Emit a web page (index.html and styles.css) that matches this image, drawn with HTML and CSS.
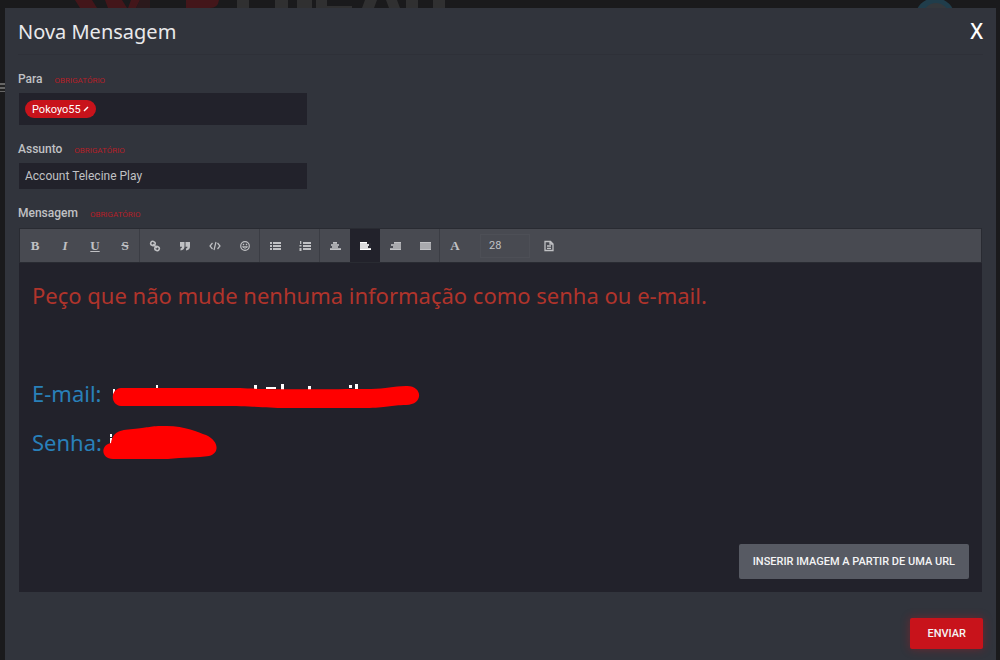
FILE: index.html
```
<!DOCTYPE html>
<html lang="pt-BR">
<head>
    <meta charset="UTF-8">
    <meta name="viewport" content="width=device-width, initial-scale=1.0">
    <title>Nova Mensagem</title>
    <link rel="stylesheet" href="styles.css">
</head>
<body>
    <svg class="topo" width="1000" height="8" viewBox="0 0 1000 8" aria-hidden="true">
        <path fill="#43161a" d="M75 0h17l5 8h-17zM105 0h17l5 8h-19zM131 0h9l-4 8h-8zM186 0h33q-1 8-9 8h-24z"/>
        <path fill="#2b191c" d="M140 0h10v8h-14z"/>
        <path fill="#303031" d="M237 0h12v8h-12zM275 0h13v8h-13zM297 0h15v8h-15zM316 0h11v8h-11zM327 6h25v2h-25zM365 0h12l-3 8h-12zM386 0h11l3 8h-11zM406 0h12v8h-12zM433 0h12v8h-12z"/>
        <circle cx="935" cy="18" r="20" fill="#203d4b"/>
        <circle cx="936" cy="16" r="13" fill="#34383c"/>
    </svg>
    <div class="menu-fundo"></div>

    <form class="modal">
        <header class="modal-topo">
            <h1>Nova Mensagem</h1>
            <button type="button" class="fechar" aria-label="Fechar">X</button>
        </header>

        <div class="campo">
            <div class="rotulo"><label for="para">Para</label><span class="obrigatorio">Obrigatório</span></div>
            <div class="caixa caixa-para">
                <button type="button" class="tag" id="para">Pokoyo55
                    <svg width="6" height="6" viewBox="0 0 6 6"><path d="M1 5L5 1" stroke="#fff" stroke-width="1.4"/></svg>
                </button>
            </div>
        </div>

        <div class="campo">
            <div class="rotulo"><label for="assunto">Assunto</label><span class="obrigatorio">Obrigatório</span></div>
            <input class="caixa assunto" id="assunto" type="text" value="Account Telecine Play">
        </div>

        <div class="rotulo"><span id="mensagem">Mensagem</span><span class="obrigatorio">Obrigatório</span></div>
        <div class="editor">
            <div class="barra">
                <div class="grupo">
                    <button type="button" class="letra" aria-label="Negrito">B</button>
                    <button type="button" class="letra italico" aria-label="Itálico">I</button>
                    <button type="button" class="letra sublinhado" aria-label="Sublinhado">U</button>
                    <button type="button" class="letra riscado" aria-label="Riscado">S</button>
                </div>
                <div class="grupo">
                    <button type="button" aria-label="Link">
                        <svg viewBox="0 0 12 12"><g fill="none" stroke="currentColor" stroke-width="1.6"><rect x="1.5" y="1.5" width="4.5" height="4" rx="2" transform="rotate(20 4 4)"/><rect x="6" y="6.5" width="4.500" height="4" rx="2" transform="rotate(20 8 8)"/><path d="M4 4l4 4"/></g></svg>
                    </button>
                    <button type="button" aria-label="Citação">
                        <svg viewBox="0 0 12 12"><path d="M1 2h4.500v4.500q0 3.500-4 4V8.500q1.500-.3 1.500-1.800H1zM6.500 2H11v4.500q0 3.500-4 4V8.500q1.500-.3 1.500-1.800h-2z"/></svg>
                    </button>
                    <button type="button" aria-label="Código">
                        <svg viewBox="0 0 12 12"><path fill="none" stroke="currentColor" stroke-width="1.200" d="M3.500 3L1 6l2.500 3M8.500 3L11 6 8.500 9M7 2L5 10"/></svg>
                    </button>
                    <button type="button" aria-label="Emoticons">
                        <svg viewBox="0 0 12 12"><circle cx="6" cy="6" r="4.300" fill="none" stroke="currentColor" stroke-width="1.200"/><path d="M3.800 3.700h1.400v1.600H3.800zM6.800 3.700h1.400v1.600H6.800z"/><path fill="none" stroke="currentColor" d="M3.500 6.800q2.500 3 5 0z"/></svg>
                    </button>
                </div>
                <div class="grupo">
                    <button type="button" aria-label="Lista">
                        <svg viewBox="0 0 12 12"><path d="M1 2h2v2H1zM4 2h8v2H4zM1 5h2v2H1zM4 5h8v2H4zM1 8h2v2H1zM4 8h8v2H4z"/></svg>
                    </button>
                    <button type="button" aria-label="Lista numerada">
                        <svg viewBox="0 0 12 12"><path d="M1 1h1.300v3H1zM4 2h8v2H4zM.5 5h2v1.500h-2zM4 5h8v2H4zM.5 8h2v3h-2zM4 8h8v2H4z"/></svg>
                    </button>
                </div>
                <div class="grupo">
                    <button type="button" aria-label="Centralizar">
                        <svg viewBox="0 0 12 12"><path d="M4 2h4v2H4zM2 4h8v2H2zM3 6h6v2H3zM1 8h11v2H1z"/><path class="vao" d="M1 4h11M1 6h11M1 8h11"/></svg>
                    </button>
                    <button type="button" class="ativo" aria-label="Alinhar à esquerda">
                        <svg viewBox="0 0 12 12"><path d="M1 2h7v2H1zM1 4h9v2H1zM1 6h8v2H1zM1 8h11v2H1z"/><path class="vao" d="M1 4h11M1 6h11M1 8h11"/></svg>
                    </button>
                    <button type="button" aria-label="Alinhar à direita">
                        <svg viewBox="0 0 12 12"><path d="M5 2h7v2H5zM2 4h10v2H2zM4 6h8v2H4zM1 8h11v2H1z"/><path class="vao" d="M1 4h11M1 6h11M1 8h11"/></svg>
                    </button>
                    <button type="button" aria-label="Justificar">
                        <svg viewBox="0 0 12 12"><path d="M1 2h11v8H1z"/><path class="vao" d="M1 4h11M1 6h11M1 8h11"/></svg>
                    </button>
                </div>
                <div class="grupo grupo-fonte">
                    <button type="button" class="letra" aria-label="Cor do texto">A</button>
                    <input class="tamanho" type="text" value="28" aria-label="Tamanho da fonte">
                    <button type="button" aria-label="Visualizar">
                        <svg viewBox="0 0 12 12"><path fill="none" stroke="currentColor" stroke-width="1.300" d="M2 1.500h5.500L10 4v6.500H2zM7 1.500V4h3M4 6h4M4 8.300h4"/></svg>
                    </button>
                </div>
            </div>

            <div class="texto" role="textbox" aria-labelledby="mensagem">
                <p class="aviso">Peço que não mude nenhuma informação como senha ou e-mail.</p>
                <p>&nbsp;</p>
                <p>E-mail:
                    <svg class="risco risco-email" width="310" height="36" viewBox="0 -6 310 36">
                        <path fill="#fff" d="M2 8h2v8H2zM45 4h2v4h-2zM143 4h3v6h-3zM155 6h10v2h-10zM170 3h3v8h-3zM197 5h3v6h-3zM238 4h3v3h-3zM244 3h3v9h-3z"/>
                        <path fill="#f00" d="M10 7H129C160 9 220 8 260 8C275 8 282 5 295 5C312 4 313 24 295 24C280 24 275 27 255 27H175C155 27 145 25 110 25H10C-1 24-1 8 10 7z"/>
                    </svg>
                </p>
                <p>Senha:
                    <svg class="risco risco-senha" width="115" height="36" viewBox="0 0 115 36">
                        <path fill="#fff" d="M7 10h2v3H7zM7 14h2v6H7z"/>
                        <path fill="#f00" d="M8 19C10 8 16 6 30 5C45 4 45 2 60 2C80 1 95 8 103 11C116 17 117 29 106 32C95 34 80 33 65 35H10C-2 35-3 21 8 19z"/>
                    </svg>
                </p>
            </div>

            <div class="rodape-editor">
                <button type="button" class="inserir">Inserir imagem a partir de uma URL</button>
            </div>
        </div>

        <div class="acoes">
            <button type="submit" class="enviar">Enviar</button>
        </div>
    </form>
</body>
</html>
```
FILE: styles.css
```
* {
    box-sizing: border-box;
}

body {
    margin: 0;
    min-height: 100vh;
    display: flex;
    flex-direction: column;
    background-color: #1a1a1c;
    color: #c0c1c4;
    font-family: Roboto, sans-serif;
    font-size: 12px;
    overflow: hidden;
}

button, input {
    font: inherit;
    color: inherit;
    border: 0;
    margin: 0;
    padding: 0;
    background: none;
}

button {
    cursor: pointer;
}

.topo {
    display: block;
}

/* botão do menu que aparece atrás da janela */
.menu-fundo {
    position: absolute;
    top: 83px;
    left: 0;
    width: 5px;
    height: 9px;
    background: repeating-linear-gradient(#666 0, #666 2px, #222 2px, #222 4px);
}

.modal {
    flex: 1;
    margin: 0 4px 0 5px;
    padding: 0 13px 11px;
    display: flex;
    flex-direction: column;
    background-color: #31343c;
}

.modal-topo {
    display: flex;
    justify-content: space-between;
    align-items: center;
    height: 47px;
    margin-bottom: 16px;
    border-bottom: 1px solid #2e3038;
    color: #e9e9eb;
}

h1 {
    margin: 0;
    font-family: "Noto Sans", sans-serif;
    font-size: 20px;
    font-weight: 400;
}

.fechar {
    font-family: "Noto Sans", sans-serif;
    font-size: 21px;
    font-weight: 500;
    color: #fff;
}

.campo {
    margin-bottom: 16px;
}

.rotulo {
    display: flex;
    align-items: center;
    gap: 12px;
    height: 16px;
    margin-bottom: 6px;
    font-weight: 500;
}

.obrigatorio {
    padding-top: 2px;
    font-size: 8px;
    font-weight: 400;
    color: #b51f28;
    text-transform: uppercase;
}

.caixa {
    display: flex;
    align-items: center;
    width: 30%;
    max-width: 288px;
    height: 26px;
    margin-left: 1px;
    padding: 0 6px;
    background-color: #22222b;
}

.caixa-para {
    height: 32px;
}

.tag {
    display: flex;
    align-items: center;
    gap: 2px;
    height: 18px;
    padding: 0 7px;
    border-radius: 9px;
    background-color: #c8131b;
    color: #fff;
    font-size: 11px;
}

.editor {
    flex: 1;
    display: flex;
    flex-direction: column;
    margin: 1px 1px 0;
    background-color: #22222b;
}

.barra {
    display: flex;
    height: 35px;
    border: 1px solid #292b32;
    background-color: #484a51;
}

.grupo {
    display: flex;
    align-items: center;
    box-shadow: inset -1px 0 #3b3d44;
}

.grupo-fonte {
    box-shadow: none;
}

.grupo button {
    display: flex;
    align-items: center;
    justify-content: center;
    width: 30px;
    height: 33px;
}

.grupo svg {
    width: 12px;
    height: 12px;
    fill: currentColor;
}

.vao {
    stroke: #484a51;
    stroke-width: .4;
}

.grupo .letra {
    font-family: "Liberation Serif", serif;
    font-weight: 700;
    font-size: 13px;
}

.grupo .italico {
    font-style: italic;
}

.grupo .sublinhado {
    text-decoration: underline;
}

.grupo .riscado {
    text-decoration: line-through;
}

.grupo .ativo {
    background-color: #22222b;
    color: #fff;
}

.tamanho {
    width: 50px;
    height: 24px;
    margin: 0 4px 0 10px;
    padding: 0 8px;
    border: 1px solid #4d4f56;
    font-size: 11px;
}

.texto {
    flex: 1;
    padding: 14px 13px;
    color: #2980b9;
    font-family: "Noto Sans", sans-serif;
    font-size: 22px;
    line-height: 36px;
}

.texto p {
    position: relative;
    margin: 0 0 13px;
}

.texto .aviso {
    color: #b0342b;
}

.risco {
    position: absolute;
    top: 0;
}

.risco-email {
    left: 79px;
}

.risco-senha {
    left: 71px;
}

.rodape-editor {
    display: flex;
    justify-content: flex-end;
    padding: 13px;
}

.inserir, .enviar {
    border-radius: 2px;
    color: #f4f4f5;
    font-size: 11px;
    font-weight: 500;
    text-transform: uppercase;
}

.inserir {
    height: 35px;
    padding: 0 14px;
    background-color: #575a63;
}

.acoes {
    display: flex;
    justify-content: flex-end;
    margin-top: 26px;
}

.enviar {
    height: 31px;
    padding: 0 17px;
    background-color: #c8131b;
    box-shadow: 0 0 10px rgba(200, 19, 27, .4);
}
```
